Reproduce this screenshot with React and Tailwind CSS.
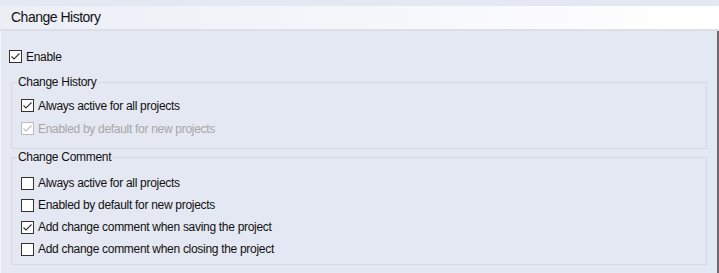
import React from 'react';

const Check = ({ checked, disabled }) => (
  <span
    className={`flex h-[13px] w-[13px] shrink-0 items-center justify-center border bg-white ${
      disabled ? 'border-[#bcbcbc]' : 'border-[#333333]'
    }`}
  >
    {checked && (
      <svg width="11" height="11" viewBox="0 0 11 11">
        <path
          d="M1.5 5.5 L4 8 L9.5 2.5"
          fill="none"
          stroke={disabled ? '#bcbcbc' : '#333333'}
          strokeWidth="1.1"
        />
      </svg>
    )}
  </span>
);

const Option = ({ label, checked, disabled, h = 'h-[23px]' }) => (
  <div className={`flex ${h} items-center gap-[4px]`}>
    <Check checked={checked} disabled={disabled} />
    <span className={disabled ? 'text-[#a6a6a6]' : 'text-[#111111]'}>{label}</span>
  </div>
);

const Group = ({ title, children, className }) => (
  <fieldset className={`mx-[10px] shrink-0 border border-[#d6d9de] pl-[9px] ${className}`}>
    <legend className="-ml-[4px] px-[1px] leading-[14px] text-[#111111]">{title}</legend>
    {children}
  </fieldset>
);

export default function App() {
  return (
    <div
      className="flex h-[273px] w-[719px] flex-col overflow-hidden bg-[#e4e8f2] text-[12px] tracking-[-0.3px]"
      style={{ fontFamily: '"Liberation Sans", Arial, sans-serif' }}
    >
      <div className="h-[6px] shrink-0" />
      <div className="flex h-[23px] shrink-0 items-center bg-gradient-to-r from-[#eceef6] to-[#ffffff] pl-[11px] text-[14px] tracking-[-0.5px] text-[#111111]">
        Change History
      </div>
      <div className="h-[2px] shrink-0 bg-[#dcdfe6]" />
      <div className="flex flex-1 flex-col border-l border-r-2 border-l-[#f4f6fa] border-r-[#6a6a6a] pt-[14px]">
        <div className="ml-[8px] shrink-0">
          <Option label="Enable" checked />
        </div>
        <Group title="Change History" className="mt-[7px] pb-[8px] pt-[5px]">
          <Option label="Always active for all projects" checked />
          <Option label="Enabled by default for new projects" checked disabled />
        </Group>
        <Group title="Change Comment" className="mt-[1px] pb-[4px] pt-[8px]">
          <Option label="Always active for all projects" h="h-[22px]" />
          <Option label="Enabled by default for new projects" h="h-[22px]" />
          <Option label="Add change comment when saving the project" checked h="h-[22px]" />
          <Option label="Add change comment when closing the project" h="h-[22px]" />
        </Group>
      </div>
    </div>
  );
}
